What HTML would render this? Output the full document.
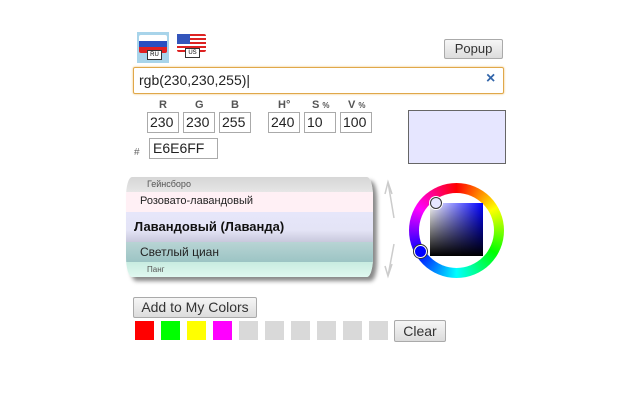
<!DOCTYPE html>
<html><head><meta charset="utf-8"><style>
body{margin:0;width:640px;height:400px;background:#fff;position:relative;font-family:"Liberation Sans",Arial,sans-serif;overflow:hidden}
.a{position:absolute}
.inp{position:absolute;border:1px solid #aaa;font-size:14px;line-height:19px;padding-left:2px;box-sizing:border-box;height:21px;color:#222}
.lbl{position:absolute;font-size:11px;font-weight:bold;color:#555;top:99px}
.btn{position:absolute;border:1px solid #aaa;border-radius:2px;background:linear-gradient(#f6f6f6,#dcdcdc);font-size:13px;color:#333;text-align:center;box-sizing:border-box}
.sw{position:absolute;top:321px;width:19px;height:19px;background:#d9d9d9}
.row{position:absolute;left:0;width:247px;box-sizing:border-box}
</style></head><body>
<div class="a" style="left:137px;top:32px;width:32px;height:31px;background:#a8d4ea"></div>
<div class="a" style="left:139px;top:35px;width:28px;height:18px;background:linear-gradient(#fff 0 33%,#2a4fc0 33% 66%,#e02020 66%);border-radius:2px"></div>
<div class="a" style="left:147px;top:50px;width:13px;height:8px;background:#fff;border:1px solid #333;font-size:6px;line-height:8px;text-align:center">RU</div>
<div class="a" style="left:177px;top:34px;width:29px;height:18px;background:repeating-linear-gradient(#d22 0 2px,#fff 2px 4px);border-radius:2px"></div>
<div class="a" style="left:177px;top:34px;width:13px;height:10px;background:#3355bb"></div>
<div class="a" style="left:185px;top:48px;width:13px;height:8px;background:#fff;border:1px solid #333;font-size:6px;line-height:8px;text-align:center">US</div>
<div class="btn" style="left:444px;top:39px;width:59px;height:20px;line-height:18px">Popup</div>
<div class="a" style="left:133px;top:67px;width:371px;height:27px;border:1px solid #e0a84a;box-sizing:border-box;border-radius:2px;box-shadow:0 0 2px #f0c070"></div>
<div class="a" style="left:139px;top:72px;font-size:14px;color:#222">rgb(230,230,255)|</div>
<div class="a" style="left:486px;top:70px;font-size:16px;color:#36a;font-weight:bold">×</div>
<div class="lbl" style="left:159px">R</div><div class="lbl" style="left:195px">G</div><div class="lbl" style="left:231px">B</div>
<div class="lbl" style="left:278px">H°</div><div class="lbl" style="left:312px">S <span style="font-size:8px">%</span></div><div class="lbl" style="left:348px">V <span style="font-size:8px">%</span></div>
<div class="inp" style="left:147px;top:112px;width:32px">230</div>
<div class="inp" style="left:183px;top:112px;width:32px">230</div>
<div class="inp" style="left:219px;top:112px;width:32px">255</div>
<div class="inp" style="left:268px;top:112px;width:32px">240</div>
<div class="inp" style="left:304px;top:112px;width:32px">10</div>
<div class="inp" style="left:340px;top:112px;width:32px">100</div>
<div class="a" style="left:134px;top:147px;font-size:10px;color:#666">#</div>
<div class="inp" style="left:149px;top:138px;width:69px;padding-left:3px">E6E6FF</div>
<div class="a" style="left:408px;top:110px;width:98px;height:54px;border:1px solid #666;box-sizing:border-box;background:#e6e6ff"></div>
<div class="a" style="left:126px;top:177px;width:247px;height:100px;border-radius:6px/20px;overflow:hidden;box-shadow:4px 4px 4px #888">
<div class="row" style="top:0;height:15px;background:linear-gradient(#d6d6d6,#e6e6e6);font-size:9px;color:#555;padding:2px 0 0 21px">Гейнсборо</div>
<div class="row" style="top:15px;height:20px;background:#fff0f5;font-size:11px;color:#222;padding:3px 0 0 14px">Розовато-лавандовый</div>
<div class="row" style="top:35px;height:30px;background:linear-gradient(#e6e6fa,#e4e4f6 60%,#c8c8dc);font-size:13px;font-weight:bold;color:#111;padding:7px 0 0 8px">Лавандовый (Лаванда)</div>
<div class="row" style="top:65px;height:20px;background:linear-gradient(#b8d4d4,#9cc4c4);font-size:12px;color:#222;padding:3px 0 0 14px">Светлый циан</div>
<div class="row" style="top:85px;height:15px;background:linear-gradient(#c8ece0,#e0f8f0);font-size:8px;color:#555;padding:3px 0 0 21px">Панг</div>
</div>
<svg class="a" style="left:380px;top:178px" width="20" height="104"><path d="M8 4 L14 40 M5 16 L8 4 L12 16" stroke="#ccc" stroke-width="1.5" fill="none"/><path d="M14 66 L8 98 M5 88 L8 98 L12 86" stroke="#ccc" stroke-width="1.5" fill="none"/></svg>
<div class="a" style="left:409px;top:183px;width:95px;height:95px;border-radius:50%;background:conic-gradient(red,#ff0,#0f0,#0ff,#00f,#f0f,red)"></div>
<div class="a" style="left:419px;top:193px;width:75px;height:75px;border-radius:50%;background:#fff"></div>
<div class="a" style="left:430px;top:203px;width:53px;height:53px;background:linear-gradient(transparent,#000),linear-gradient(90deg,#fff,#00f)"></div>
<div class="a" style="left:430px;top:197px;width:10px;height:10px;border-radius:50%;background:#e6e6ff;border:1.5px solid #333;box-shadow:0 0 0 1px #fff"></div>
<div class="a" style="left:414px;top:245px;width:11px;height:11px;border-radius:50%;background:#00f;border:1.5px solid #fff;box-shadow:0 0 0 1px #333"></div>
<div class="btn" style="left:133px;top:297px;width:124px;height:21px;line-height:19px;font-size:14px">Add to My Colors</div>
<div class="sw" style="left:135px;background:#f00"></div><div class="sw" style="left:161px;background:#0f0"></div><div class="sw" style="left:187px;background:#ff0"></div><div class="sw" style="left:213px;background:#f0f"></div>
<div class="sw" style="left:239px"></div><div class="sw" style="left:265px"></div><div class="sw" style="left:291px"></div><div class="sw" style="left:317px"></div><div class="sw" style="left:343px"></div><div class="sw" style="left:369px"></div>
<div class="btn" style="left:394px;top:320px;width:52px;height:22px;line-height:20px;font-size:14px">Clear</div>
</body></html>
